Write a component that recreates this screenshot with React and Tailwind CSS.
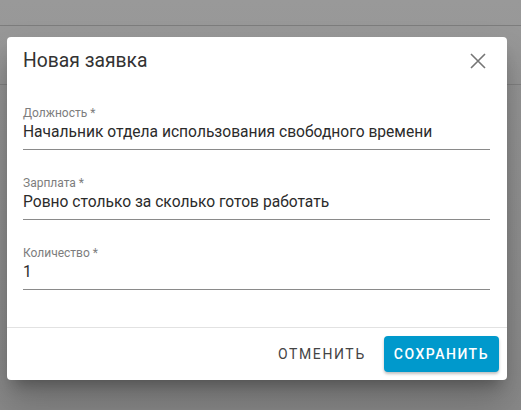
function Field({ label, value }) {
  return (
    <div className="flex flex-col">
      <label className="text-[12px] leading-[14px] text-[#7d7d7d]">{label}</label>
      <div className="mt-[3px] pb-[7px] text-[15.6px] leading-[19px] text-[#2b2b2b] border-b border-[#8a8a8a]">
        {value}
      </div>
    </div>
  );
}

export default function App() {
  return (
    <div
      className="relative w-[521px] h-[410px] overflow-hidden bg-gradient-to-b from-[#999999] to-[#8a8a8a]"
      style={{ fontFamily: 'Roboto, "Liberation Sans", sans-serif' }}
    >
      {/* page behind the overlay */}
      <div className="h-[26px] border-b border-[#7d7d7d]" />
      <div className="h-[59px] border-b border-[#828282]" />

      {/* dialog */}
      <div className="absolute left-[7px] top-[37px] w-[500px] rounded-[4px] bg-white shadow-[0_11px_15px_-7px_rgba(0,0,0,0.3),0_24px_38px_3px_rgba(0,0,0,0.2)]">
        <div className="flex items-center justify-between pl-4 pr-5 pt-[10px] pb-[4px]">
          <h2 className="text-[19.3px] leading-[28px] text-[#333]">Новая заявка</h2>
          <button className="w-[18px] h-[18px] flex items-center justify-center text-[#757575]">
            <svg width="16" height="16" viewBox="0 0 16 16" fill="none" stroke="currentColor" strokeWidth="1.6">
              <path d="M1 1l14 14M15 1L1 15" />
            </svg>
          </button>
        </div>

        <div className="flex flex-col gap-[26px] pl-4 pr-[17px] pt-[27px] pb-[37px]">
          <Field label="Должность *" value="Начальник отдела использования свободного времени" />
          <Field label="Зарплата *" value="Ровно столько за сколько готов работать" />
          <Field label="Количество *" value="1" />
        </div>

        <div className="flex items-center justify-end gap-[2px] border-t border-[#e2e2e2] px-2 py-2">
          <button className="h-9 px-4 text-[14px] font-normal tracking-[1.6px] text-[#444] uppercase">
            Отменить
          </button>
          <button className="h-9 px-[10px] rounded-[4px] bg-[#0099cc] text-[14px] font-medium tracking-[1.5px] text-white uppercase shadow-[0_2px_3px_rgba(0,0,0,0.25)]">
            Сохранить
          </button>
        </div>
      </div>
    </div>
  );
}
